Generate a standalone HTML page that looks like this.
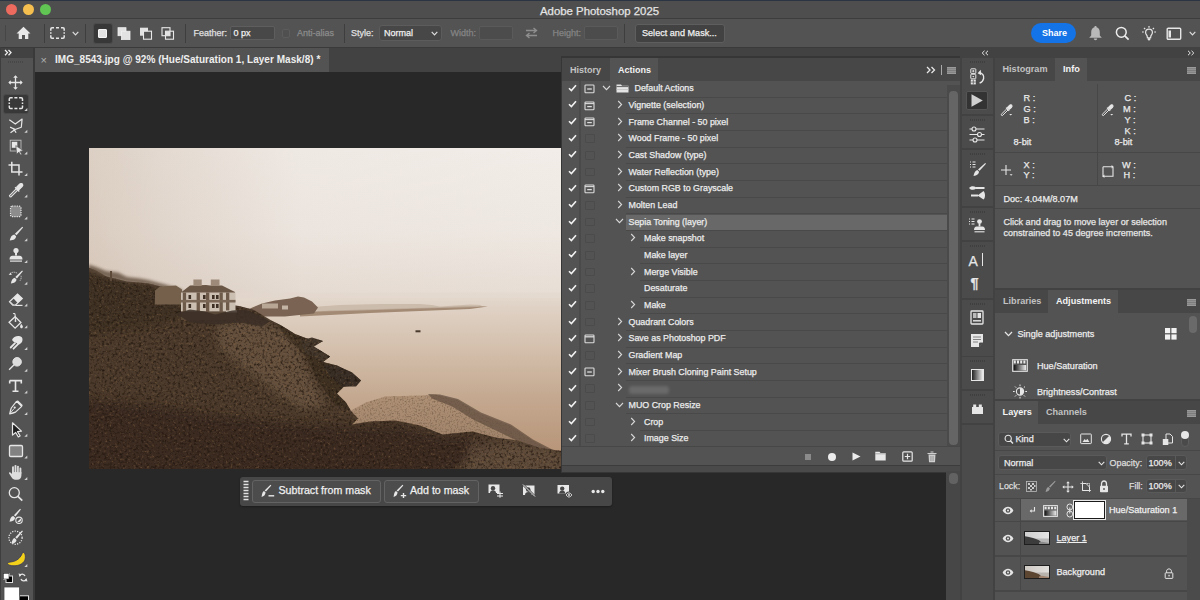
<!DOCTYPE html>
<html><head><meta charset="utf-8">
<style>
*{margin:0;padding:0;box-sizing:border-box}
html,body{width:1200px;height:600px;overflow:hidden;background:#282828;font-family:"Liberation Sans",sans-serif;color:#e6e6e6}
.a{position:absolute}
.t{position:absolute;white-space:nowrap;line-height:1;-webkit-text-stroke:0.25px currentColor}
#title{left:0;top:0;width:1200px;height:18px;background:#4e4e4e;border-top:1px solid #2b3442}
#opt{left:0;top:18px;width:1200px;height:30px;background:#535353;border-top:1px solid #3d3d3d;border-bottom:1px solid #3a3a3a}
#tabbar{left:35px;top:48px;width:527px;height:24px;background:#424242}
#doctab{left:35px;top:48px;width:294px;height:24px;background:#535353}
#tools{left:0;top:48px;width:33px;height:552px;background:#535353}
#toolsTop{left:0;top:47.5px;width:33px;height:10px;background:#424242}
#toolsBorder{left:32.5px;top:47px;width:2.5px;height:553px;background:#3a3a3a}
.sep{position:absolute;width:1px;background:#3e3e3e}
.inp{position:absolute;background:#3e3e3e;border:1px solid #5d5d5d;border-radius:2px}
</style></head><body>
<!-- title bar -->
<div id="title" class="a"></div>
<div class="a" style="left:6px;top:4px;width:11px;height:11px;border-radius:50%;background:#ed6a5e"></div>
<div class="a" style="left:23px;top:4px;width:11px;height:11px;border-radius:50%;background:#f5bf4f"></div>
<div class="a" style="left:40px;top:4px;width:11px;height:11px;border-radius:50%;background:#61c554"></div>
<div class="t" style="left:540px;top:5.6px;font-size:11.4px;color:#e4e4e4">Adobe Photoshop 2025</div>

<!-- options bar -->
<div id="opt" class="a"></div>
<div class="a" style="left:0;top:48px;width:1200px;height:24px;background:#424242"></div>


<!-- options bar content -->
<div class="sep" style="left:5px;top:25px;height:16px;background:#464646"></div>
<svg class="a" style="left:16px;top:26px" width="15" height="14" viewBox="0 0 15 14"><path d="M7.5 0.8 L14.5 7.5 L12.3 7.5 L12.3 13 L9 13 L9 9 L6 9 L6 13 L2.7 13 L2.7 7.5 L0.5 7.5 Z" fill="#e8e8e8"/></svg>
<div class="sep" style="left:44px;top:24px;height:19px"></div>
<svg class="a" style="left:50px;top:27px" width="15" height="12" viewBox="0 0 15 12"><path d="M0.8 3.8 V2 Q0.8 0.8 2 0.8 H4 M11 0.8 H13 Q14.2 0.8 14.2 2 V3.8 M14.2 8.2 V10 Q14.2 11.2 13 11.2 H11 M4 11.2 H2 Q0.8 11.2 0.8 10 V8.2 M6 0.8 H9 M6 11.2 H9 M0.8 5.2 V6.8 M14.2 5.2 V6.8" stroke="#e6e6e6" stroke-width="1.5" fill="none"/></svg>
<svg class="a" style="left:72px;top:31px" width="7" height="5" viewBox="0 0 7 5"><path d="M0.7 0.8 L3.5 3.8 L6.3 0.8" stroke="#ddd" stroke-width="1.2" fill="none"/></svg>
<div class="sep" style="left:85px;top:24px;height:19px"></div>
<div class="a" style="left:93px;top:23px;width:19.5px;height:20.5px;background:#383838;border:1px solid #4c4c4c;border-radius:3px"></div>
<div class="a" style="left:98px;top:28.5px;width:9px;height:9.5px;background:#e2e2e2;border:1px solid #f5f5f5;border-radius:1px"></div>
<svg class="a" style="left:117px;top:27px" width="14" height="13" viewBox="0 0 14 13"><rect x="1" y="0.7" width="8" height="8" fill="#e2e2e2" stroke="#f0f0f0" stroke-width="0.8"/><rect x="4.5" y="4.2" width="8.5" height="8.5" fill="#e2e2e2" stroke="#f0f0f0" stroke-width="0.8"/></svg>
<svg class="a" style="left:139px;top:27px" width="14" height="13" viewBox="0 0 14 13"><rect x="1" y="0.7" width="8" height="8" fill="#e2e2e2"/><rect x="4.5" y="4.2" width="8" height="8" fill="#535353" stroke="#e8e8e8" stroke-width="1.1"/></svg>
<svg class="a" style="left:161px;top:27px" width="14" height="13" viewBox="0 0 14 13"><rect x="1" y="0.7" width="8" height="8" fill="none" stroke="#e8e8e8" stroke-width="1.1"/><rect x="4.5" y="4.2" width="8" height="8" fill="none" stroke="#e8e8e8" stroke-width="1.1"/><rect x="4.5" y="4.2" width="4.5" height="4.5" fill="#e2e2e2"/></svg>
<div class="sep" style="left:185px;top:24px;height:19px"></div>
<div class="t" style="left:193.5px;top:29px;font-size:9px;color:#e0e0e0">Feather:</div>
<div class="inp" style="left:230px;top:26px;width:44.5px;height:14px;background:#484848;border-color:#5e5e5e"></div>
<div class="t" style="left:233.5px;top:29px;font-size:9px;color:#f0f0f0">0 px</div>
<div class="a" style="left:281.5px;top:29px;width:8.5px;height:8.5px;border:1px solid #5c5c5c;border-radius:2px;background:#505050"></div>
<div class="t" style="left:297px;top:29px;font-size:9px;color:#8c8c8c">Anti-alias</div>
<div class="sep" style="left:344px;top:24px;height:19px"></div>
<div class="t" style="left:351px;top:29px;font-size:9px;color:#e0e0e0">Style:</div>
<div class="inp" style="left:379px;top:25px;width:63px;height:16px;background:#474747;border-color:#5c5c5c;border-radius:3px"></div>
<div class="t" style="left:384px;top:29px;font-size:9px;color:#f0f0f0">Normal</div>
<svg class="a" style="left:431px;top:31px" width="7" height="5" viewBox="0 0 7 5"><path d="M0.7 0.8 L3.5 3.8 L6.3 0.8" stroke="#ddd" stroke-width="1.2" fill="none"/></svg>
<div class="t" style="left:450.5px;top:29px;font-size:9px;color:#858585">Width:</div>
<div class="inp" style="left:479px;top:26px;width:33.5px;height:14px;background:#4c4c4c;border-color:#5a5a5a"></div>
<svg class="a" style="left:525px;top:27px" width="13" height="12" viewBox="0 0 13 12"><path d="M1 3.5 H11 M8.5 1 L11.5 3.5 L8.5 6 M12 8.5 H2 M4.5 6 L1.5 8.5 L4.5 11" stroke="#8e8e8e" stroke-width="1.4" fill="none"/></svg>
<div class="t" style="left:552.5px;top:29px;font-size:9px;color:#858585">Height:</div>
<div class="inp" style="left:584px;top:26px;width:34px;height:14px;background:#4c4c4c;border-color:#5a5a5a"></div>
<div class="sep" style="left:624px;top:24px;height:19px"></div>
<div class="a" style="left:634.5px;top:24px;width:90.5px;height:18.5px;background:#424242;border:1px solid #5e5e5e;border-radius:3px"></div>
<div class="t" style="left:642px;top:29px;font-size:9.1px;color:#f0f0f0">Select and Mask...</div>
<div class="a" style="left:1031px;top:23px;width:45px;height:20px;background:#1473e6;border-radius:10px"></div>
<div class="t" style="left:1042px;top:28.5px;font-size:9px;font-weight:bold;color:#fff;-webkit-text-stroke:0">Share</div>
<svg class="a" style="left:1088px;top:25px" width="15" height="16" viewBox="0 0 15 16"><path d="M7.5 1 C8.3 1 8.6 1.6 8.6 2.2 C11 2.8 11.8 5 11.8 7.5 L11.8 10.5 L13.8 12.8 L1.2 12.8 L3.2 10.5 L3.2 7.5 C3.2 5 4 2.8 6.4 2.2 C6.4 1.6 6.7 1 7.5 1 Z M5.8 13.6 L9.2 13.6 C9.2 14.6 8.4 15.3 7.5 15.3 C6.6 15.3 5.8 14.6 5.8 13.6Z" fill="#b9b9b9"/></svg>
<svg class="a" style="left:1115px;top:26px" width="15" height="15" viewBox="0 0 15 15"><circle cx="6.3" cy="6.3" r="4.9" stroke="#ececec" stroke-width="1.5" fill="none"/><path d="M9.8 9.8 L13.6 13.6" stroke="#ececec" stroke-width="1.7"/></svg>
<svg class="a" style="left:1141px;top:25px" width="16" height="16" viewBox="0 0 16 16"><path d="M8 1 V2.8 M3 3 L4.2 4.2 M13 3 L11.8 4.2 M1 7 H2.8 M15 7 H13.2" stroke="#e6e6e6" stroke-width="1.2"/><path d="M8 4.2 C10.1 4.2 11.4 5.7 11.4 7.5 C11.4 9 10.4 9.7 9.9 10.8 L9.6 12.8 L6.4 12.8 L6.1 10.8 C5.6 9.7 4.6 9 4.6 7.5 C4.6 5.7 5.9 4.2 8 4.2 Z" stroke="#e6e6e6" stroke-width="1.2" fill="none"/><circle cx="8" cy="14.2" r="1.2" fill="#e6e6e6"/></svg>
<svg class="a" style="left:1166px;top:27px" width="16" height="14" viewBox="0 0 16 14"><rect x="1.2" y="1.2" width="13.5" height="11" rx="1" stroke="#e6e6e6" stroke-width="1.4" fill="none"/><rect x="2.5" y="3.5" width="2.5" height="7" fill="#e6e6e6"/></svg>
<svg class="a" style="left:1188.5px;top:31px" width="7" height="5" viewBox="0 0 7 5"><path d="M0.7 0.8 L3.5 3.8 L6.3 0.8" stroke="#ddd" stroke-width="1.2" fill="none"/></svg>

<!-- canvas area -->
<div id="doctab" class="a"></div>
<div class="t" style="left:40.5px;top:54.5px;font-size:11px;color:#b0b0b0;-webkit-text-stroke:0">&#215;</div>
<div class="t" style="left:55px;top:55px;font-size:10px;font-weight:bold;color:#eee;letter-spacing:0.03px;-webkit-text-stroke:0">IMG_8543.jpg @ 92% (Hue/Saturation 1, Layer Mask/8) *</div>

<!-- left tools -->
<div id="tools" class="a"></div>
<div id="toolsTop" class="a"></div>
<div id="toolsBorder" class="a"></div>

<!-- photo -->
<svg class="a" style="left:89px;top:147.5px" width="473.0" height="321.7" viewBox="0 0 473.0 321.7">
<defs>
<linearGradient id="skyH" x1="0" y1="0" x2="1" y2="0"><stop offset="0" stop-color="#dccfc3"/><stop offset="0.15" stop-color="#e3d9d0"/><stop offset="0.45" stop-color="#efe9e4"/><stop offset="1" stop-color="#f2ede8"/></linearGradient>
<linearGradient id="skyV" x1="0" y1="0" x2="0" y2="1"><stop offset="0" stop-color="#b89c84" stop-opacity="0"/><stop offset="0.55" stop-color="#b89c84" stop-opacity="0.06"/><stop offset="1" stop-color="#b89c84" stop-opacity="0.2"/></linearGradient>
<linearGradient id="sea" x1="0" y1="0" x2="0" y2="1"><stop offset="0" stop-color="#e2d6cb"/><stop offset="0.25" stop-color="#d6c3b1"/><stop offset="0.6" stop-color="#c3a78e"/><stop offset="1" stop-color="#b38f72"/></linearGradient>
<linearGradient id="beach" x1="0" y1="0" x2="0" y2="1"><stop offset="0" stop-color="#ae9075"/><stop offset="1" stop-color="#977c64"/></linearGradient>
<filter id="tex" x="0" y="0" width="100%" height="100%" color-interpolation-filters="sRGB"><feTurbulence type="fractalNoise" baseFrequency="0.38" numOctaves="3" seed="11" result="n"/><feColorMatrix in="n" type="matrix" values="0 0 0 0 0.12  0 0 0 0 0.08  0 0 0 0 0.05  0 0 0 -2.1 1.12" result="d"/><feColorMatrix in="n" type="matrix" values="0 0 0 0 0.6  0 0 0 0 0.45  0 0 0 0 0.3  1.3 0 0 0 -0.76" result="l"/><feComposite in="d" in2="SourceGraphic" operator="in" result="dd"/><feComposite in="l" in2="SourceGraphic" operator="in" result="ll"/><feMerge><feMergeNode in="SourceGraphic"/><feMergeNode in="dd"/><feMergeNode in="ll"/></feMerge></filter>
<filter id="tex2" x="0" y="0" width="100%" height="100%" color-interpolation-filters="sRGB"><feTurbulence type="fractalNoise" baseFrequency="0.6" numOctaves="2" seed="7" result="n"/><feColorMatrix in="n" type="matrix" values="0 0 0 0 0.42  0 0 0 0 0.33  0 0 0 0 0.25  0 0 0 -1.6 0.85" result="d"/><feComposite in="d" in2="SourceGraphic" operator="in" result="dd"/><feMerge><feMergeNode in="SourceGraphic"/><feMergeNode in="dd"/></feMerge></filter>
<filter id="soft" x="-5%" y="-5%" width="110%" height="110%"><feGaussianBlur stdDeviation="0.7"/></filter>
<filter id="soft3" x="-50%" y="-50%" width="200%" height="200%"><feGaussianBlur stdDeviation="4"/></filter>
</defs>
<clipPath id="pc"><rect x="0" y="0" width="473.0" height="321.7"/></clipPath>
<rect x="0" y="0" width="473.0" height="321.7" fill="url(#skyH)"/>
<rect x="0" y="0" width="473.0" height="150.5" fill="url(#skyV)"/>
<rect x="0" y="150.0" width="473.0" height="171.7" fill="url(#sea)"/>
<rect x="0" y="144.5" width="473.0" height="8" fill="#e4d8cd" opacity="0.5" filter="url(#soft)"/>
<polygon points="211.0,164.5 241.0,162.5 291.0,161.0 341.0,159.5 381.0,158.0 399.0,158.5 381.0,161.0 331.0,163.0 281.0,165.0 241.0,167.0 211.0,168.5" fill="#a38a74" filter="url(#soft)"/>
<polygon points="216.0,159.5 251.0,157.0 291.0,156.0 331.0,156.0 343.0,157.0 351.0,158.5 381.0,156.5 393.0,157.0 389.0,159.0 331.0,160.5 271.0,162.5 231.0,163.5" fill="#c6b5a4" opacity="0.75" filter="url(#soft)"/>
<polygon points="161.0,160.5 173.0,155.5 186.0,152.5 201.0,150.5 209.0,148.5 215.0,149.5 223.0,153.5 229.0,159.5 225.0,165.5 196.0,168.5 166.0,168.5" fill="#7a6452" filter="url(#soft)"/>
<rect x="173" y="155.5" width="16" height="5" fill="#c8b8a6" opacity="0.8"/><rect x="193" y="157.5" width="6" height="4" fill="#d6c8b8" opacity="0.8"/>
<polygon points="262.0,262.5 277.0,254.5 296.0,248.5 331.0,247.5 346.0,246.5 368.5,252.0 391.0,265.5 421.0,277.5 443.5,292.5 466.0,304.5 473.0,307.5 473.0,322.5 256.0,322.5" fill="url(#beach)" filter="url(#tex2)"/>
<polygon points="339.0,246.0 351.0,246.5 369.0,251.0 392.0,264.5 422.0,276.5 444.0,291.5 467.0,303.5 473.0,306.5 473.0,312.5 459.0,307.5 436.0,296.5 411.0,284.5 386.0,272.5 363.0,258.5 343.0,250.5" fill="#5e4c3c" opacity="0.7" filter="url(#soft)"/>
<g clip-path="url(#pc)"><g filter="url(#tex)">
<polygon points="-0.5,119.5 7.0,122.5 17.0,128.2 38.0,133.5 59.0,135.2 76.0,139.5 90.5,144.5 111.0,152.5 150.0,158.0 164.0,161.5 181.5,172.0 192.0,177.3 206.0,186.0 220.0,191.3 234.0,193.0 223.5,198.3 241.0,208.5 234.0,214.0 248.0,217.5 263.0,224.5 272.0,232.5 267.0,237.5 255.0,238.5 248.0,245.5 257.0,254.5 262.0,263.0 269.0,270.5 263.0,276.5 281.0,273.5 306.0,272.5 331.0,277.5 353.5,286.5 383.5,283.5 406.0,289.5 428.5,292.5 451.0,300.0 473.0,303.0 473.0,322.5 -0.5,322.5" fill="#4c3b2c"/>
<clipPath id="hc"><polygon points="-0.5,119.5 7.0,122.5 17.0,128.2 38.0,133.5 59.0,135.2 76.0,139.5 90.5,144.5 111.0,152.5 150.0,158.0 164.0,161.5 181.5,172.0 192.0,177.3 206.0,186.0 220.0,191.3 234.0,193.0 223.5,198.3 241.0,208.5 234.0,214.0 248.0,217.5 263.0,224.5 272.0,232.5 267.0,237.5 255.0,238.5 248.0,245.5 257.0,254.5 262.0,263.0 269.0,270.5 263.0,276.5 281.0,273.5 306.0,272.5 331.0,277.5 353.5,286.5 383.5,283.5 406.0,289.5 428.5,292.5 451.0,300.0 473.0,303.0 473.0,322.5 -0.5,322.5"/></clipPath>
<g clip-path="url(#hc)">
<polygon points="126.0,178.5 156.0,170.5 179.0,174.5 199.0,186.5 211.0,200.5 217.0,218.5 227.0,238.5 237.0,256.5 216.0,262.5 186.0,244.5 156.0,220.5 131.0,200.5" fill="#7a644e" opacity="0.55" filter="url(#soft3)"/>
<polygon points="-9.0,114.5 17.0,124.5 38.0,130.5 59.0,132.5 76.0,137.5 93.0,148.5 106.0,167.5 61.0,177.5 -9.0,187.5" fill="#35291e" opacity="0.5" filter="url(#soft3)"/>
<polygon points="-29.0,247.5 61.0,257.5 131.0,268.5 211.0,276.5 256.0,278.5 311.0,278.5 351.0,288.5 381.0,288.5 411.0,296.5 341.0,332.5 -29.0,342.5" fill="#30241a" opacity="0.6" filter="url(#soft3)"/>
<polygon points="381.0,292.5 431.0,294.5 473.0,302.5 486.0,332.5 371.0,332.5" fill="#6f5a46" opacity="0.55" filter="url(#soft3)"/>
<polygon points="186.0,174.5 211.0,186.5 234.0,193.5 242.0,210.0 251.0,218.5 271.0,234.5 263.0,262.5 246.0,257.5 229.0,232.5 216.0,207.5 196.0,187.5" fill="#35291f" opacity="0.55" filter="url(#soft)"/>
</g>
<polygon points="234.0,216.5 249.0,218.5 263.0,224.5 272.0,232.5 267.0,238.5 253.0,238.5 241.0,228.5" fill="#3a2f26"/>
<polygon points="211.0,192.5 223.0,189.5 234.0,193.0 225.0,198.5 241.0,208.5 233.0,214.5 216.0,204.5" fill="#44372b"/>
</g></g>
<filter id="soft15" x="-20%" y="-50%" width="140%" height="200%"><feGaussianBlur stdDeviation="1.6"/></filter>
<polygon points="-0.5,116.5 7.0,119.0 17.0,123.0 29.0,124.5 38.0,129.0 51.0,130.5 59.0,132.0 76.0,136.5 93.0,141.5 93.0,144.5 76.0,140.5 59.0,136.5 38.0,134.5 17.0,129.5 -0.5,123.5" fill="#5e4c3a" opacity="0.8" filter="url(#soft15)"/>
<rect x="21" y="123.0" width="2" height="10" fill="#5e4a38"/>
<polygon points="66.0,142.5 71.0,138.5 87.0,137.5 93.0,141.5 93.0,156.5 66.0,156.5" fill="#74604c" filter="url(#soft)"/>
<polygon points="92.0,144.5 101.0,137.5 117.0,137.0 121.0,137.5 133.0,137.5 146.0,144.0 146.0,145.5 92.0,145.5" fill="#6a5645"/>
<rect x="104.4" y="131.5" width="8.3" height="6.5" fill="#9d8a78"/><rect x="121.80000000000001" y="131.5" width="8.7" height="6.5" fill="#9d8a78"/>
<rect x="92" y="144.5" width="54.5" height="19.3" fill="#cbbfb2"/>
<rect x="93.80000000000001" y="144.5" width="3.3" height="19.3" fill="#6e5a48"/>
<rect x="107.6" y="144.5" width="3.3" height="19.3" fill="#6e5a48"/>
<rect x="117" y="144.5" width="3.3" height="19.3" fill="#6e5a48"/>
<rect x="130.5" y="144.5" width="3.3" height="19.3" fill="#6e5a48"/>
<rect x="137" y="144.5" width="3.3" height="19.3" fill="#6e5a48"/>
<rect x="92" y="151.89999999999998" width="54.5" height="2.6" fill="#7a6654"/>
<rect x="99.5" y="147.0" width="2.6" height="4" fill="#3e3024"/>
<rect x="99.5" y="156.0" width="2.6" height="4" fill="#3e3024"/>
<rect x="114" y="147.0" width="2.6" height="4" fill="#3e3024"/>
<rect x="114" y="156.0" width="2.6" height="4" fill="#3e3024"/>
<rect x="123" y="147.0" width="2.6" height="4" fill="#3e3024"/>
<rect x="123" y="156.0" width="2.6" height="4" fill="#3e3024"/>
<rect x="127" y="147.0" width="2.6" height="4" fill="#3e3024"/>
<rect x="127" y="156.0" width="2.6" height="4" fill="#3e3024"/>
<rect x="92" y="163.5" width="54.5" height="8.5" fill="#5a4838"/>
<rect x="137" y="162.5" width="11" height="2" fill="#d9cfc3"/>
<polygon points="87.0,165.5 101.0,161.5 116.0,163.5 126.0,166.5 143.0,162.5 156.0,161.5 169.0,166.5 181.0,173.5 173.0,178.5 151.0,174.5 126.0,176.5 101.0,174.5" fill="#3a2f25" opacity="0.85" filter="url(#soft)"/>
<rect x="326.5" y="182.3" width="5" height="2" fill="#4a3b2f"/>
</svg>
<!-- mask bar -->
<div class="a" style="left:240px;top:477px;width:372px;height:29px;background:#474747;border-radius:3px;box-shadow:0 1px 2px rgba(0,0,0,0.3)"></div>
<svg class="a" style="left:242.5px;top:480px" width="6" height="23" viewBox="0 0 6 23"><path d="M0.5 1.5 H5.5 M0.5 4.5 H5.5 M0.5 7.5 H5.5 M0.5 10.5 H5.5 M0.5 13.5 H5.5 M0.5 16.5 H5.5 M0.5 19.5 H5.5" stroke="#e0e0e0" stroke-width="1.3"/></svg>
<div class="a" style="left:252px;top:479.5px;width:129px;height:23.5px;background:#4c4c4c;border:1px solid #636363;border-radius:3px"></div>
<div class="a" style="left:384px;top:479.5px;width:94.7px;height:23.5px;background:#4c4c4c;border:1px solid #636363;border-radius:3px"></div>
<svg class="a" style="left:261px;top:484px" width="14" height="14" viewBox="0 0 14 14"><path d="M9.5 0.8 L10.3 1.6 L5 7.6 L3.6 6.4 Z" fill="#e8e8e8"/><path d="M3 7 L4.6 8.6 C4.4 10.8 2.8 12.6 0.6 13 C0.9 10.4 1.4 7.6 3 7 Z" fill="#e8e8e8"/><path d="M7.5 11.8 H13.2" stroke="#e8e8e8" stroke-width="1.4"/></svg>
<div class="t" style="left:278.5px;top:485px;font-size:10.65px;color:#f0f0f0">Subtract from mask</div>
<svg class="a" style="left:393px;top:484px" width="14" height="14" viewBox="0 0 14 14"><path d="M9.5 0.8 L10.3 1.6 L5 7.6 L3.6 6.4 Z" fill="#e8e8e8"/><path d="M3 7 L4.6 8.6 C4.4 10.8 2.8 12.6 0.6 13 C0.9 10.4 1.4 7.6 3 7 Z" fill="#e8e8e8"/><path d="M7.8 11.6 H13.2 M10.5 8.9 V14" stroke="#e8e8e8" stroke-width="1.4"/></svg>
<div class="t" style="left:410px;top:485px;font-size:10.65px;color:#f0f0f0">Add to mask</div>
<svg class="a" style="left:488px;top:484px" width="16" height="14" viewBox="0 0 16 14"><rect x="0.5" y="0.5" width="11" height="8.5" fill="#e8e8e8"/><circle cx="5" cy="4.2" r="2.2" fill="#474747"/><path d="M2 9 C2 7 3.5 6.2 5 6.2 C6.5 6.2 8 7 8 9Z" fill="#474747"/><path d="M9 9.5 H15 M9 12 H15 M12 7.5 V13.8" stroke="#e8e8e8" stroke-width="1"/></svg>
<svg class="a" style="left:522px;top:484px" width="14" height="13" viewBox="0 0 14 13"><rect x="1" y="1.5" width="11.5" height="9.5" fill="#e8e8e8"/><circle cx="6.2" cy="5.5" r="2.3" fill="#474747"/><path d="M3 11 C3 8.8 4.5 8 6.2 8 C7.9 8 9.4 8.8 9.4 11Z" fill="#474747"/><path d="M1 0.5 L13 12.5" stroke="#474747" stroke-width="2.2"/><path d="M1 0.5 L13 12.5" stroke="#e8e8e8" stroke-width="1"/></svg>
<svg class="a" style="left:557px;top:483.5px" width="16" height="15" viewBox="0 0 16 15"><rect x="0.5" y="1" width="11.5" height="8.5" fill="#e8e8e8"/><circle cx="5.2" cy="4.6" r="2.2" fill="#474747"/><path d="M2.2 9.5 C2.2 7.5 3.6 6.6 5.2 6.6 C6.8 6.6 8.2 7.5 8.2 9.5Z" fill="#474747"/><circle cx="12" cy="11" r="3.4" fill="#474747"/><path d="M9.2 11 C10 9.6 11 9 12 9 C13 9 14 9.6 14.8 11 C14 12.4 13 13 12 13 C11 13 10 12.4 9.2 11Z" stroke="#e8e8e8" stroke-width="0.9" fill="none"/><circle cx="12" cy="11" r="0.9" fill="#e8e8e8"/></svg>
<svg class="a" style="left:590.5px;top:488.5px" width="14" height="5" viewBox="0 0 14 5"><circle cx="2.2" cy="2.5" r="1.7" fill="#e8e8e8"/><circle cx="7" cy="2.5" r="1.7" fill="#e8e8e8"/><circle cx="11.8" cy="2.5" r="1.7" fill="#e8e8e8"/></svg>
<!-- actions panel -->
<div class="a" style="left:561.3px;top:55.5px;width:400.7px;height:417px;background:#363636"></div>
<div class="a" style="left:562px;top:58px;width:398px;height:412px;background:#535353"></div>
<div class="a" style="left:562px;top:58px;width:398px;height:23.3px;background:#474747"></div>
<div class="a" style="left:610px;top:58px;width:47.5px;height:23.3px;background:#535353"></div>
<div class="t" style="left:570px;top:65.5px;font-size:9px;font-weight:bold;color:#c4c4c4;-webkit-text-stroke:0">History</div>
<div class="t" style="left:618px;top:65.5px;font-size:9px;font-weight:bold;color:#f2f2f2;-webkit-text-stroke:0">Actions</div>
<svg class="a" style="left:926px;top:66px" width="10" height="8" viewBox="0 0 10 8"><path d="M1 1 L4 4 L1 7 M5.5 1 L8.5 4 L5.5 7" stroke="#e8e8e8" stroke-width="1.3" fill="none"/></svg>
<div class="a" style="left:940.8px;top:65px;width:1px;height:10px;background:#aaa"></div>
<svg class="a" style="left:947px;top:66.5px" width="9" height="7" viewBox="0 0 9 7"><rect x="0" y="0" width="9" height="7" fill="#9a9a9a"/><path d="M0 1.75 H9 M0 3.5 H9 M0 5.25 H9" stroke="#6a6a6a" stroke-width="0.6"/></svg>
<div class="a" style="left:579.3px;top:81.3px;width:1.6px;height:364.7px;background:#4a4a4a"></div>
<div class="a" style="left:947px;top:85px;width:13px;height:361px;background:#4a4a4a"></div>
<div class="a" style="left:949px;top:91px;width:8.5px;height:354px;background:#656565;border-radius:4px"></div>
<div class="a" style="left:626px;top:96.67px;width:321px;height:1px;background:#494949"></div>
<svg class="a" style="left:567.5px;top:83.50px" width="9" height="8" viewBox="0 0 9 8"><path d="M1 4.2 L3.4 6.6 L8 1.2" stroke="#f2f2f2" stroke-width="1.6" fill="none"/></svg>
<svg class="a" style="left:584px;top:83.90px" width="11" height="10" viewBox="0 0 11 10"><rect x="1" y="1" width="9" height="7.8" rx="0.8" stroke="#dcdcdc" stroke-width="1.1" fill="none"/><path d="M3.2 5 H7.8" stroke="#dcdcdc" stroke-width="1.3"/></svg>
<svg class="a" style="left:601.5px;top:85.00px" width="9" height="6" viewBox="0 0 9 6"><path d="M1 1 L4.5 4.6 L8 1" stroke="#d8d8d8" stroke-width="1.1" fill="none"/></svg>
<svg class="a" style="left:615.5px;top:84.30px" width="13" height="9" viewBox="0 0 13 9"><path d="M0.5 0.5 H5 L6 1.8 H12.5 V8.5 H0.5 Z" fill="#e4e4e4"/><path d="M0.5 2.6 H12.5" stroke="#535353" stroke-width="0.9"/><path d="M0.5 5.5 H12.5" stroke="#bdbdbd" stroke-width="0.7"/></svg>
<div class="t" style="left:634.5px;top:84.20px;font-size:8.9px;color:#ececec">Default Actions</div>
<div class="a" style="left:626px;top:113.33px;width:321px;height:1px;background:#494949"></div>
<svg class="a" style="left:567.5px;top:100.17px" width="9" height="8" viewBox="0 0 9 8"><path d="M1 4.2 L3.4 6.6 L8 1.2" stroke="#f2f2f2" stroke-width="1.6" fill="none"/></svg>
<svg class="a" style="left:584px;top:100.57px" width="11" height="10" viewBox="0 0 11 10"><rect x="1" y="1" width="9" height="7.8" rx="0.8" stroke="#dcdcdc" stroke-width="1.1" fill="none"/><path d="M1 2.6 H10" stroke="#dcdcdc" stroke-width="1.1"/><path d="M3.2 5.6 H7.8" stroke="#dcdcdc" stroke-width="1.3"/></svg>
<svg class="a" style="left:616.5px;top:99.97px" width="6" height="9" viewBox="0 0 6 9"><path d="M1.2 1 L4.6 4.5 L1.2 8" stroke="#d8d8d8" stroke-width="1.1" fill="none"/></svg>
<div class="t" style="left:628.5px;top:100.87px;font-size:8.9px;color:#ececec">Vignette (selection)</div>
<div class="a" style="left:626px;top:130.00px;width:321px;height:1px;background:#494949"></div>
<svg class="a" style="left:567.5px;top:116.83px" width="9" height="8" viewBox="0 0 9 8"><path d="M1 4.2 L3.4 6.6 L8 1.2" stroke="#f2f2f2" stroke-width="1.6" fill="none"/></svg>
<svg class="a" style="left:584px;top:117.23px" width="11" height="10" viewBox="0 0 11 10"><rect x="1" y="1" width="9" height="7.8" rx="0.8" stroke="#dcdcdc" stroke-width="1.1" fill="none"/><path d="M1 2.6 H10" stroke="#dcdcdc" stroke-width="1.1"/><path d="M3.2 5.6 H7.8" stroke="#dcdcdc" stroke-width="1.3"/></svg>
<svg class="a" style="left:616.5px;top:116.63px" width="6" height="9" viewBox="0 0 6 9"><path d="M1.2 1 L4.6 4.5 L1.2 8" stroke="#d8d8d8" stroke-width="1.1" fill="none"/></svg>
<div class="t" style="left:628.5px;top:117.53px;font-size:8.9px;color:#ececec">Frame Channel - 50 pixel</div>
<div class="a" style="left:626px;top:146.67px;width:321px;height:1px;background:#494949"></div>
<svg class="a" style="left:567.5px;top:133.50px" width="9" height="8" viewBox="0 0 9 8"><path d="M1 4.2 L3.4 6.6 L8 1.2" stroke="#f2f2f2" stroke-width="1.6" fill="none"/></svg>
<div class="a" style="left:584.5px;top:134.40px;width:10px;height:8.5px;border:1px solid #4b4b4b;border-radius:1px"></div>
<svg class="a" style="left:616.5px;top:133.30px" width="6" height="9" viewBox="0 0 6 9"><path d="M1.2 1 L4.6 4.5 L1.2 8" stroke="#d8d8d8" stroke-width="1.1" fill="none"/></svg>
<div class="t" style="left:628.5px;top:134.20px;font-size:8.9px;color:#ececec">Wood Frame - 50 pixel</div>
<div class="a" style="left:626px;top:163.34px;width:321px;height:1px;background:#494949"></div>
<svg class="a" style="left:567.5px;top:150.17px" width="9" height="8" viewBox="0 0 9 8"><path d="M1 4.2 L3.4 6.6 L8 1.2" stroke="#f2f2f2" stroke-width="1.6" fill="none"/></svg>
<div class="a" style="left:584.5px;top:151.07px;width:10px;height:8.5px;border:1px solid #4b4b4b;border-radius:1px"></div>
<svg class="a" style="left:616.5px;top:149.97px" width="6" height="9" viewBox="0 0 6 9"><path d="M1.2 1 L4.6 4.5 L1.2 8" stroke="#d8d8d8" stroke-width="1.1" fill="none"/></svg>
<div class="t" style="left:628.5px;top:150.87px;font-size:8.9px;color:#ececec">Cast Shadow (type)</div>
<div class="a" style="left:626px;top:180.00px;width:321px;height:1px;background:#494949"></div>
<svg class="a" style="left:567.5px;top:166.83px" width="9" height="8" viewBox="0 0 9 8"><path d="M1 4.2 L3.4 6.6 L8 1.2" stroke="#f2f2f2" stroke-width="1.6" fill="none"/></svg>
<div class="a" style="left:584.5px;top:167.73px;width:10px;height:8.5px;border:1px solid #4b4b4b;border-radius:1px"></div>
<svg class="a" style="left:616.5px;top:166.63px" width="6" height="9" viewBox="0 0 6 9"><path d="M1.2 1 L4.6 4.5 L1.2 8" stroke="#d8d8d8" stroke-width="1.1" fill="none"/></svg>
<div class="t" style="left:628.5px;top:167.53px;font-size:8.9px;color:#ececec">Water Reflection (type)</div>
<div class="a" style="left:626px;top:196.67px;width:321px;height:1px;background:#494949"></div>
<svg class="a" style="left:567.5px;top:183.50px" width="9" height="8" viewBox="0 0 9 8"><path d="M1 4.2 L3.4 6.6 L8 1.2" stroke="#f2f2f2" stroke-width="1.6" fill="none"/></svg>
<svg class="a" style="left:584px;top:183.90px" width="11" height="10" viewBox="0 0 11 10"><rect x="1" y="1" width="9" height="7.8" rx="0.8" stroke="#dcdcdc" stroke-width="1.1" fill="none"/><path d="M1 2.6 H10" stroke="#dcdcdc" stroke-width="1.1"/><path d="M3.2 5.6 H7.8" stroke="#dcdcdc" stroke-width="1.3"/></svg>
<svg class="a" style="left:616.5px;top:183.30px" width="6" height="9" viewBox="0 0 6 9"><path d="M1.2 1 L4.6 4.5 L1.2 8" stroke="#d8d8d8" stroke-width="1.1" fill="none"/></svg>
<div class="t" style="left:628.5px;top:184.20px;font-size:8.9px;color:#ececec">Custom RGB to Grayscale</div>
<div class="a" style="left:626px;top:213.34px;width:321px;height:1px;background:#494949"></div>
<svg class="a" style="left:567.5px;top:200.17px" width="9" height="8" viewBox="0 0 9 8"><path d="M1 4.2 L3.4 6.6 L8 1.2" stroke="#f2f2f2" stroke-width="1.6" fill="none"/></svg>
<div class="a" style="left:584.5px;top:201.07px;width:10px;height:8.5px;border:1px solid #4b4b4b;border-radius:1px"></div>
<svg class="a" style="left:616.5px;top:199.97px" width="6" height="9" viewBox="0 0 6 9"><path d="M1.2 1 L4.6 4.5 L1.2 8" stroke="#d8d8d8" stroke-width="1.1" fill="none"/></svg>
<div class="t" style="left:628.5px;top:200.87px;font-size:8.9px;color:#ececec">Molten Lead</div>
<div class="a" style="left:626px;top:214.94px;width:321px;height:15.47px;background:#686868"></div>
<div class="a" style="left:626px;top:230.00px;width:321px;height:1px;background:#494949"></div>
<svg class="a" style="left:567.5px;top:216.84px" width="9" height="8" viewBox="0 0 9 8"><path d="M1 4.2 L3.4 6.6 L8 1.2" stroke="#f2f2f2" stroke-width="1.6" fill="none"/></svg>
<div class="a" style="left:584.5px;top:217.74px;width:10px;height:8.5px;border:1px solid #4b4b4b;border-radius:1px"></div>
<svg class="a" style="left:614.5px;top:218.34px" width="9" height="6" viewBox="0 0 9 6"><path d="M1 1 L4.5 4.6 L8 1" stroke="#d8d8d8" stroke-width="1.1" fill="none"/></svg>
<div class="t" style="left:628.5px;top:217.54px;font-size:8.9px;color:#ececec">Sepia Toning (layer)</div>
<div class="a" style="left:639.5px;top:246.67px;width:307.5px;height:1px;background:#494949"></div>
<svg class="a" style="left:567.5px;top:233.50px" width="9" height="8" viewBox="0 0 9 8"><path d="M1 4.2 L3.4 6.6 L8 1.2" stroke="#f2f2f2" stroke-width="1.6" fill="none"/></svg>
<div class="a" style="left:584.5px;top:234.40px;width:10px;height:8.5px;border:1px solid #4b4b4b;border-radius:1px"></div>
<svg class="a" style="left:629.5px;top:233.30px" width="6" height="9" viewBox="0 0 6 9"><path d="M1.2 1 L4.6 4.5 L1.2 8" stroke="#d8d8d8" stroke-width="1.1" fill="none"/></svg>
<div class="t" style="left:644px;top:234.20px;font-size:8.9px;color:#ececec">Make snapshot</div>
<div class="a" style="left:639.5px;top:263.34px;width:307.5px;height:1px;background:#494949"></div>
<svg class="a" style="left:567.5px;top:250.17px" width="9" height="8" viewBox="0 0 9 8"><path d="M1 4.2 L3.4 6.6 L8 1.2" stroke="#f2f2f2" stroke-width="1.6" fill="none"/></svg>
<div class="a" style="left:584.5px;top:251.07px;width:10px;height:8.5px;border:1px solid #4b4b4b;border-radius:1px"></div>
<div class="t" style="left:644px;top:250.87px;font-size:8.9px;color:#ececec">Make layer</div>
<div class="a" style="left:639.5px;top:280.00px;width:307.5px;height:1px;background:#494949"></div>
<svg class="a" style="left:567.5px;top:266.84px" width="9" height="8" viewBox="0 0 9 8"><path d="M1 4.2 L3.4 6.6 L8 1.2" stroke="#f2f2f2" stroke-width="1.6" fill="none"/></svg>
<div class="a" style="left:584.5px;top:267.74px;width:10px;height:8.5px;border:1px solid #4b4b4b;border-radius:1px"></div>
<svg class="a" style="left:629.5px;top:266.64px" width="6" height="9" viewBox="0 0 6 9"><path d="M1.2 1 L4.6 4.5 L1.2 8" stroke="#d8d8d8" stroke-width="1.1" fill="none"/></svg>
<div class="t" style="left:644px;top:267.54px;font-size:8.9px;color:#ececec">Merge Visible</div>
<div class="a" style="left:639.5px;top:296.67px;width:307.5px;height:1px;background:#494949"></div>
<svg class="a" style="left:567.5px;top:283.50px" width="9" height="8" viewBox="0 0 9 8"><path d="M1 4.2 L3.4 6.6 L8 1.2" stroke="#f2f2f2" stroke-width="1.6" fill="none"/></svg>
<div class="a" style="left:584.5px;top:284.40px;width:10px;height:8.5px;border:1px solid #4b4b4b;border-radius:1px"></div>
<div class="t" style="left:644px;top:284.20px;font-size:8.9px;color:#ececec">Desaturate</div>
<div class="a" style="left:639.5px;top:313.34px;width:307.5px;height:1px;background:#494949"></div>
<svg class="a" style="left:567.5px;top:300.17px" width="9" height="8" viewBox="0 0 9 8"><path d="M1 4.2 L3.4 6.6 L8 1.2" stroke="#f2f2f2" stroke-width="1.6" fill="none"/></svg>
<div class="a" style="left:584.5px;top:301.07px;width:10px;height:8.5px;border:1px solid #4b4b4b;border-radius:1px"></div>
<svg class="a" style="left:629.5px;top:299.97px" width="6" height="9" viewBox="0 0 6 9"><path d="M1.2 1 L4.6 4.5 L1.2 8" stroke="#d8d8d8" stroke-width="1.1" fill="none"/></svg>
<div class="t" style="left:644px;top:300.87px;font-size:8.9px;color:#ececec">Make</div>
<div class="a" style="left:626px;top:330.01px;width:321px;height:1px;background:#494949"></div>
<svg class="a" style="left:567.5px;top:316.84px" width="9" height="8" viewBox="0 0 9 8"><path d="M1 4.2 L3.4 6.6 L8 1.2" stroke="#f2f2f2" stroke-width="1.6" fill="none"/></svg>
<div class="a" style="left:584.5px;top:317.74px;width:10px;height:8.5px;border:1px solid #4b4b4b;border-radius:1px"></div>
<svg class="a" style="left:616.5px;top:316.64px" width="6" height="9" viewBox="0 0 6 9"><path d="M1.2 1 L4.6 4.5 L1.2 8" stroke="#d8d8d8" stroke-width="1.1" fill="none"/></svg>
<div class="t" style="left:628.5px;top:317.54px;font-size:8.9px;color:#ececec">Quadrant Colors</div>
<div class="a" style="left:626px;top:346.67px;width:321px;height:1px;background:#494949"></div>
<svg class="a" style="left:567.5px;top:333.50px" width="9" height="8" viewBox="0 0 9 8"><path d="M1 4.2 L3.4 6.6 L8 1.2" stroke="#f2f2f2" stroke-width="1.6" fill="none"/></svg>
<svg class="a" style="left:584px;top:333.91px" width="11" height="10" viewBox="0 0 11 10"><rect x="1" y="1" width="9" height="7.8" rx="0.8" stroke="#dcdcdc" stroke-width="1.1" fill="none"/><path d="M1 2.8 H10" stroke="#dcdcdc" stroke-width="1.3"/></svg>
<svg class="a" style="left:616.5px;top:333.31px" width="6" height="9" viewBox="0 0 6 9"><path d="M1.2 1 L4.6 4.5 L1.2 8" stroke="#d8d8d8" stroke-width="1.1" fill="none"/></svg>
<div class="t" style="left:628.5px;top:334.20px;font-size:8.9px;color:#ececec">Save as Photoshop PDF</div>
<div class="a" style="left:626px;top:363.34px;width:321px;height:1px;background:#494949"></div>
<svg class="a" style="left:567.5px;top:350.17px" width="9" height="8" viewBox="0 0 9 8"><path d="M1 4.2 L3.4 6.6 L8 1.2" stroke="#f2f2f2" stroke-width="1.6" fill="none"/></svg>
<div class="a" style="left:584.5px;top:351.07px;width:10px;height:8.5px;border:1px solid #4b4b4b;border-radius:1px"></div>
<svg class="a" style="left:616.5px;top:349.97px" width="6" height="9" viewBox="0 0 6 9"><path d="M1.2 1 L4.6 4.5 L1.2 8" stroke="#d8d8d8" stroke-width="1.1" fill="none"/></svg>
<div class="t" style="left:628.5px;top:350.87px;font-size:8.9px;color:#ececec">Gradient Map</div>
<div class="a" style="left:626px;top:380.01px;width:321px;height:1px;background:#494949"></div>
<svg class="a" style="left:567.5px;top:366.84px" width="9" height="8" viewBox="0 0 9 8"><path d="M1 4.2 L3.4 6.6 L8 1.2" stroke="#f2f2f2" stroke-width="1.6" fill="none"/></svg>
<svg class="a" style="left:584px;top:367.24px" width="11" height="10" viewBox="0 0 11 10"><rect x="1" y="1" width="9" height="7.8" rx="0.8" stroke="#dcdcdc" stroke-width="1.1" fill="none"/><path d="M3.2 5 H7.8" stroke="#dcdcdc" stroke-width="1.3"/></svg>
<svg class="a" style="left:616.5px;top:366.64px" width="6" height="9" viewBox="0 0 6 9"><path d="M1.2 1 L4.6 4.5 L1.2 8" stroke="#d8d8d8" stroke-width="1.1" fill="none"/></svg>
<div class="t" style="left:628.5px;top:367.54px;font-size:8.9px;color:#ececec">Mixer Brush Cloning Paint Setup</div>
<div class="a" style="left:626px;top:396.67px;width:321px;height:1px;background:#494949"></div>
<svg class="a" style="left:567.5px;top:383.51px" width="9" height="8" viewBox="0 0 9 8"><path d="M1 4.2 L3.4 6.6 L8 1.2" stroke="#f2f2f2" stroke-width="1.6" fill="none"/></svg>
<div class="a" style="left:584.5px;top:384.41px;width:10px;height:8.5px;border:1px solid #4b4b4b;border-radius:1px"></div>
<svg class="a" style="left:616.5px;top:383.31px" width="6" height="9" viewBox="0 0 6 9"><path d="M1.2 1 L4.6 4.5 L1.2 8" stroke="#d8d8d8" stroke-width="1.1" fill="none"/></svg>
<div class="a" style="left:629px;top:385.81px;width:40px;height:8px;background:#6a6a6a;border-radius:3px;filter:blur(1.8px)"></div>
<div class="a" style="left:626px;top:413.34px;width:321px;height:1px;background:#494949"></div>
<svg class="a" style="left:567.5px;top:400.17px" width="9" height="8" viewBox="0 0 9 8"><path d="M1 4.2 L3.4 6.6 L8 1.2" stroke="#f2f2f2" stroke-width="1.6" fill="none"/></svg>
<div class="a" style="left:584.5px;top:401.07px;width:10px;height:8.5px;border:1px solid #4b4b4b;border-radius:1px"></div>
<svg class="a" style="left:614.5px;top:401.67px" width="9" height="6" viewBox="0 0 9 6"><path d="M1 1 L4.5 4.6 L8 1" stroke="#d8d8d8" stroke-width="1.1" fill="none"/></svg>
<div class="t" style="left:628.5px;top:400.87px;font-size:8.9px;color:#ececec">MUO Crop Resize</div>
<div class="a" style="left:639.5px;top:430.01px;width:307.5px;height:1px;background:#494949"></div>
<svg class="a" style="left:567.5px;top:416.84px" width="9" height="8" viewBox="0 0 9 8"><path d="M1 4.2 L3.4 6.6 L8 1.2" stroke="#f2f2f2" stroke-width="1.6" fill="none"/></svg>
<div class="a" style="left:584.5px;top:417.74px;width:10px;height:8.5px;border:1px solid #4b4b4b;border-radius:1px"></div>
<svg class="a" style="left:629.5px;top:416.64px" width="6" height="9" viewBox="0 0 6 9"><path d="M1.2 1 L4.6 4.5 L1.2 8" stroke="#d8d8d8" stroke-width="1.1" fill="none"/></svg>
<div class="t" style="left:644px;top:417.54px;font-size:8.9px;color:#ececec">Crop</div>
<div class="a" style="left:639.5px;top:446.67px;width:307.5px;height:1px;background:#494949"></div>
<svg class="a" style="left:567.5px;top:433.51px" width="9" height="8" viewBox="0 0 9 8"><path d="M1 4.2 L3.4 6.6 L8 1.2" stroke="#f2f2f2" stroke-width="1.6" fill="none"/></svg>
<div class="a" style="left:584.5px;top:434.41px;width:10px;height:8.5px;border:1px solid #4b4b4b;border-radius:1px"></div>
<svg class="a" style="left:629.5px;top:433.31px" width="6" height="9" viewBox="0 0 6 9"><path d="M1.2 1 L4.6 4.5 L1.2 8" stroke="#d8d8d8" stroke-width="1.1" fill="none"/></svg>
<div class="t" style="left:644px;top:434.21px;font-size:8.9px;color:#ececec">Image Size</div>
<div class="a" style="left:562px;top:446px;width:398px;height:19.5px;background:#535353;border-top:1px solid #474747"></div>
<div class="a" style="left:562px;top:465.3px;width:398px;height:6.7px;background:#4a4a4a;border-top:1.5px solid #3c3c3c"></div>
<div class="a" style="left:805px;top:453.5px;width:6px;height:6px;background:#8a8a8a"></div>
<div class="a" style="left:828px;top:452.5px;width:8px;height:8px;border-radius:50%;background:#ececec"></div>
<svg class="a" style="left:852px;top:452.0px" width="9" height="9" viewBox="0 0 9 9"><path d="M0.5 0.5 L8.5 4.5 L0.5 8.5Z" fill="#ececec"/></svg>
<svg class="a" style="left:875px;top:451.0px" width="11" height="10" viewBox="0 0 11 10"><path d="M0.3 0.8 H4.5 L5.5 2 H10.7 V9.5 H0.3 Z" fill="#e8e8e8"/><path d="M0.3 2.8 H10.7" stroke="#7a7a7a" stroke-width="0.6"/></svg>
<svg class="a" style="left:902px;top:451.3px" width="11" height="11" viewBox="0 0 11 11"><rect x="0.8" y="0.8" width="9.4" height="9.4" rx="1" stroke="#e8e8e8" stroke-width="1.2" fill="none"/><path d="M5.5 2.8 V8.2 M2.8 5.5 H8.2" stroke="#e8e8e8" stroke-width="1.2"/></svg>
<svg class="a" style="left:926.5px;top:450.5px" width="10" height="12" viewBox="0 0 10 12"><path d="M3.5 1 H6.5 M0.5 2.5 H9.5" stroke="#cfcfcf" stroke-width="1.1"/><path d="M1.5 3.5 H8.5 L8 11.3 H2 Z" fill="#cfcfcf"/><path d="M3.7 5 V10 M5 5 V10 M6.3 5 V10" stroke="#8a8a8a" stroke-width="0.6"/></svg>
<!-- tools -->
<div class="a" style="left:3px;top:93.8px;width:26px;height:20px;background:#383838;border:1px solid #4a4a4a;border-radius:3px"></div>
<svg class="a" style="left:0;top:0" width="33" height="600" viewBox="0 0 33 600">
<path d="M5 50 L7.5 52.6 L5 55.2 M8.5 50 L11 52.6 L8.5 55.2" stroke="#f0f0f0" stroke-width="1.3" fill="none"/><rect x="0" y="47" width="1" height="553" fill="#3e3e3e"/>
<path d="M8 62 H23" stroke="#474747" stroke-width="2" stroke-dasharray="1 1"/>
<g transform="translate(5.5 72.5)"><path d="M10 3.5 V16.5 M3.5 10 H16.5" stroke="#e6e6e6" stroke-width="1.3"/><path d="M10 2.8 L12.3 5.3 H7.7Z M10 17.2 L12.3 14.7 H7.7Z M2.8 10 L5.3 7.7 V12.3Z M17.2 10 L14.7 7.7 V12.3Z" fill="#e6e6e6"/></g>
<g transform="translate(5.5 93.5)"><path d="M3.8 7.4 V5.6 Q3.8 4.3 5.1 4.3 H7.2 M13.6 4.3 H15.7 Q17 4.3 17 5.6 V7.4 M17 12 V13.8 Q17 15.1 15.7 15.1 H13.6 M7.2 15.1 H5.1 Q3.8 15.1 3.8 13.8 V12 M8.9 4.3 H11.9 M8.9 15.1 H11.9 M3.8 9 V10.4 M17 9 V10.4" stroke="#e6e6e6" stroke-width="1.5" fill="none"/></g>
<path d="M27.3 108.0 V111.0 H24.3 Z" fill="#cfcfcf"/>
<g transform="translate(5.5 115.3)"><path d="M3.8 4.5 L9.8 8.8 L16.6 3.8 L15.8 12 L9.6 14.2 L4.6 11.8" stroke="#e6e6e6" stroke-width="1.2" fill="none" stroke-linejoin="round"/><path d="M9.6 14.2 L5 17.5 M7.8 12.8 L10.6 17.4" stroke="#e6e6e6" stroke-width="1.2"/></g>
<path d="M27.3 129.8 V132.8 H24.3 Z" fill="#cfcfcf"/>
<g transform="translate(5.5 137)"><rect x="4.7" y="3.2" width="10.8" height="10.8" stroke="#bdbdbd" stroke-width="0.9" fill="none"/><rect x="6.3" y="4.8" width="5.5" height="6" fill="#e6e6e6"/><path d="M10.3 8.6 L17.8 13.6 L14.6 14.4 L16.4 17.4 L15.1 18 L13.4 15.1 L11.1 17.2 Z" fill="#e6e6e6" stroke="#535353" stroke-width="0.7"/></g>
<path d="M27.3 151.5 V154.5 H24.3 Z" fill="#cfcfcf"/>
<g transform="translate(5.5 158.5)"><path d="M6.3 3.2 V13.5 H17 M3 6.5 H13.5 V17" stroke="#e6e6e6" stroke-width="1.5" fill="none"/></g>
<path d="M27.3 173.0 V176.0 H24.3 Z" fill="#cfcfcf"/>
<g transform="translate(5.5 180)"><path d="M4.5 16.8 L4 15.6 L11 8.6 L12.4 10 L5.4 17 Z" stroke="#e6e6e6" stroke-width="1.1" fill="none"/><path d="M9.6 7.2 L13.8 11.4 M11.5 7 L14.4 4.1 C15.2 3.3 16.5 3.6 16.9 4.2 C17.4 5 17.1 6 16.5 6.6 L13.5 9.4Z" stroke="#e6e6e6" stroke-width="1.4" fill="#e6e6e6"/></g>
<path d="M27.3 194.5 V197.5 H24.3 Z" fill="#cfcfcf"/>
<g transform="translate(5.5 202)"><rect x="5" y="4.2" width="10.5" height="10.5" rx="1.6" fill="#8c8c8c" stroke="#e6e6e6" stroke-width="1.2" stroke-dasharray="1.2 1.1"/></g>
<path d="M27.3 216.5 V219.5 H24.3 Z" fill="#cfcfcf"/>
<g transform="translate(5.5 223.7)"><path d="M16.8 3 L17.6 3.8 L11 11.5 L9.4 10 Z" fill="#e6e6e6"/><path d="M8.8 10.8 L10.6 12.6 C10.4 15 8.6 16.6 4.2 16.8 C5 13.4 6.2 11.2 8.8 10.8 Z" fill="#e6e6e6"/></g>
<path d="M27.3 238.2 V241.2 H24.3 Z" fill="#cfcfcf"/>
<g transform="translate(5.5 245.5)"><circle cx="10.5" cy="5" r="2.6" fill="#e6e6e6"/><path d="M10.5 7 V10" stroke="#e6e6e6" stroke-width="2"/><path d="M4 14 C4 11.5 5 10.3 7 10.3 H14 C16 10.3 17 11.5 17 14 Z" fill="#e6e6e6"/><path d="M4.5 15.6 H16.5" stroke="#e6e6e6" stroke-width="1.2"/></g>
<path d="M27.3 260.0 V263.0 H24.3 Z" fill="#cfcfcf"/>
<g transform="translate(5.5 267.3)"><path d="M16.6 3.2 L17.4 4 L11.4 11.2 L9.8 9.8 Z" fill="#e6e6e6"/><path d="M9.2 10.5 L11 12.3 C10.8 14.6 9 16 5.4 16.2 C6 13 7 11 9.2 10.5 Z" fill="#e6e6e6"/><path d="M3.2 7.4 L5.2 5.2 L6.2 7.6Z" fill="#e6e6e6"/><path d="M5 6 C7 4.5 9.6 4.6 11.6 5.8 M15.5 8.5 C16 10 15.6 12.5 14 14" stroke="#e6e6e6" stroke-width="0.9" fill="none" stroke-dasharray="1 1"/></g>
<path d="M27.3 281.8 V284.8 H24.3 Z" fill="#cfcfcf"/>
<g transform="translate(5.5 289)"><path d="M4 12.8 L12 5 L16.8 9.6 L9.8 16.2 L7.2 16.2 Z" stroke="#e6e6e6" stroke-width="1.2" fill="none"/><path d="M12 5 L16.8 9.6 L12.2 14 L7.8 9.2 Z" fill="#e6e6e6"/><path d="M10 16.4 H17" stroke="#e6e6e6" stroke-width="1.2"/><path d="M5 13 L8 16" stroke="#e6e6e6" stroke-width="1"/></g>
<path d="M27.3 303.5 V306.5 H24.3 Z" fill="#cfcfcf"/>
<g transform="translate(5.5 310.7)"><path d="M3.6 11.6 L9.6 6 L15.4 11.8 L9.6 17.4 Z" stroke="#e6e6e6" stroke-width="1.3" fill="none"/><path d="M7.6 3 C8.6 2.4 9.4 3 9.6 4 L10 10" stroke="#e6e6e6" stroke-width="1.1" fill="none"/><circle cx="10" cy="10.3" r="0.9" fill="#e6e6e6"/><path d="M15.6 13 C16.8 14.5 17.4 15.3 17.4 16 C17.4 16.9 16.7 17.5 16 17.5 C15.2 17.5 14.6 16.9 14.6 16 C14.6 15.3 15 14.5 15.6 13Z" fill="#e6e6e6"/></g>
<path d="M27.3 325.2 V328.2 H24.3 Z" fill="#cfcfcf"/>
<g transform="translate(5.5 332.5)"><path d="M5.2 15 L9.5 10.6 M8 16.2 L12 12.2" stroke="#e6e6e6" stroke-width="1.8" stroke-linecap="round"/><path d="M6.5 7.5 C7.5 4.5 10.5 3.4 13.5 3.6 C16.2 3.8 17.2 5.4 17 7.6 C16.8 10 15 11.6 12.8 12.4 L11 10.6 L8.4 9.6 Z" fill="#e6e6e6"/></g>
<path d="M27.3 347.0 V350.0 H24.3 Z" fill="#cfcfcf"/>
<g transform="translate(5.5 354.2)"><circle cx="11.6" cy="7.6" r="4.3" fill="#dcdcdc" stroke="#e6e6e6" stroke-width="0.9"/><path d="M8.6 10.6 L3.6 15.6" stroke="#e6e6e6" stroke-width="1.3"/></g>
<path d="M27.3 368.7 V371.7 H24.3 Z" fill="#cfcfcf"/>
<g transform="translate(5.5 376)"><path d="M4.2 4.6 H15.8 V7.6 M4.2 7.6 V4.6 M10 4.6 V15.2 M7 15.2 H13" stroke="#e6e6e6" stroke-width="1.6" fill="none"/></g>
<path d="M27.3 390.5 V393.5 H24.3 Z" fill="#cfcfcf"/>
<g transform="translate(5.5 397.6)"><path d="M11 3.8 L16.2 8.8 L10 14.5 C8 15.3 6 15.8 4.2 16.2 C4.6 14.4 5 12.4 5.8 10.4 Z" stroke="#e6e6e6" stroke-width="1.2" fill="none" stroke-linejoin="round"/><path d="M12.3 2.6 L17.4 7.6 L16 9 L11 4 Z" fill="#e6e6e6"/><circle cx="9.2" cy="10" r="1.1" fill="#e6e6e6"/><path d="M4.5 15.9 L8.5 11" stroke="#e6e6e6" stroke-width="0.9"/></g>
<path d="M27.3 412.1 V415.1 H24.3 Z" fill="#cfcfcf"/>
<g transform="translate(5.5 419.3)"><path d="M7 3.5 L16 11.8 L12 12.3 L14.6 16.6 L12.8 17.6 L10.2 13.2 L7 15.8 Z" fill="#1e1e1e" stroke="#e6e6e6" stroke-width="1.2" stroke-linejoin="round"/></g>
<path d="M27.3 433.8 V436.8 H24.3 Z" fill="#cfcfcf"/>
<g transform="translate(5.5 441)"><rect x="4" y="4.5" width="13" height="11" rx="1.2" fill="#828282" stroke="#e6e6e6" stroke-width="1.3"/></g>
<path d="M27.3 455.5 V458.5 H24.3 Z" fill="#cfcfcf"/>
<g transform="translate(5.5 462.6)"><path d="M7.6 10.5 V4.6 M10 10 V3.4 M12.4 10 V4.2 M14.8 10.8 V6" stroke="#dedede" stroke-width="2.1" stroke-linecap="round"/><path d="M6.5 9.5 H15.9 V13 C15.9 15.6 14.4 17.2 11.8 17.2 H9.6 C8.1 17.2 7.1 16.3 6.2 15 L3.6 11 C3.1 10.1 4 9.2 4.9 9.8 L6.6 11.3 Z" fill="#dedede"/><path d="M8.8 4 V9.5 M11.2 3.2 V9.5 M13.6 4.5 V9.8" stroke="#535353" stroke-width="0.45"/></g>
<path d="M27.3 477.1 V480.1 H24.3 Z" fill="#cfcfcf"/>
<g transform="translate(5.5 484.3)"><circle cx="8.8" cy="8.4" r="5" stroke="#e6e6e6" stroke-width="1.3" fill="none"/><path d="M12.4 12 L16.8 16.4" stroke="#e6e6e6" stroke-width="1.7"/></g>
<g transform="translate(5.5 506)"><path d="M14.6 2.8 L15.4 3.6 L10 10.6 L8.4 9.2 Z" fill="#e6e6e6"/><path d="M7.8 10 L9.6 11.8 C9.4 14 7.6 15.6 4 15.8 C4.6 12.6 5.6 10.4 7.8 10 Z" fill="#e6e6e6"/><circle cx="13.5" cy="14.3" r="3.2" fill="none" stroke="#e6e6e6" stroke-width="1.1"/><path d="M11.8 15.8 L15.2 12.6 C15.8 13.6 15.6 15 14.8 15.6 C14 16.4 12.6 16.4 11.8 15.8Z" fill="#e6e6e6"/></g>
<g transform="translate(5.5 527.7)"><circle cx="10" cy="10" r="6.6" stroke="#e6e6e6" stroke-width="1.3" fill="none" stroke-dasharray="1.2 1.3"/><path d="M16.6 2.8 L17.4 3.6 L11.4 11 L9.8 9.6 Z" fill="#e6e6e6"/><path d="M9.2 10.4 L11 12.2 C10.8 14.3 9.2 15.6 6 15.8 C6.6 12.8 7.4 10.8 9.2 10.4 Z" fill="#e6e6e6"/></g>
<g transform="translate(5.5 549.4)"><path d="M17.2 2.8 L18.8 3.2 C19.8 5 20.2 7.5 19.6 9.8 C18.6 13.8 14 16.4 8.5 16.4 C5.5 16.4 2.4 15.6 2.1 14.3 C1.9 13.4 3 12.8 5.2 12.6 C9.6 12.2 13.4 10 15.4 6.6 C16.2 5.2 16.8 4 17.2 2.8 Z" fill="#f3d11a" stroke="#34345a" stroke-width="0.8"/></g>
<path d="M27.3 563.9 V566.9 H24.3 Z" fill="#cfcfcf"/>
<rect x="3.5" y="573.5" width="6" height="6" fill="#fff" stroke="#ddd" stroke-width="0.6"/>
<rect x="6" y="576" width="6.5" height="6.5" fill="#000" stroke="#ddd" stroke-width="1"/>
<rect x="3.5" y="573.5" width="5.5" height="5.5" fill="#fff" stroke="#222" stroke-width="0.6"/>
<path d="M19.5 575.5 C21 573.5 24 573.5 25 576 M26.5 579.5 C25 581.5 22 581.5 21 579" stroke="#e6e6e6" stroke-width="1.3" fill="none"/><path d="M18.5 573.5 L21.8 574.2 L19.6 577 Z M27.5 581.5 L24.2 580.8 L26.4 578 Z" fill="#e6e6e6"/>
<rect x="19.5" y="595.8" width="9" height="8" fill="#000" stroke="#e6e6e6" stroke-width="1"/>
<rect x="4" y="587" width="15.5" height="15" fill="#fff" stroke="#4a4a4a" stroke-width="0.8"/>
</svg>
<!-- dock -->
<div class="a" style="left:946px;top:471px;width:15px;height:129px;background:#474747"></div>
<div class="a" style="left:949px;top:473px;width:8.5px;height:11px;background:#626262;border-radius:4px"></div>
<div class="a" style="left:960px;top:47px;width:240px;height:553px;background:#424242"></div>
<svg class="a" style="left:981px;top:50px" width="8" height="6" viewBox="0 0 8 6"><path d="M3.5 0.8 L1.2 3 L3.5 5.2 M7 0.8 L4.7 3 L7 5.2" stroke="#e6e6e6" stroke-width="1" fill="none"/></svg>
<svg class="a" style="left:1187px;top:50px" width="8" height="6" viewBox="0 0 8 6"><path d="M1 0.8 L3.3 3 L1 5.2 M4.5 0.8 L6.8 3 L4.5 5.2" stroke="#e6e6e6" stroke-width="1" fill="none"/></svg>
<div class="a" style="left:962px;top:58px;width:30.5px;height:56px;background:#4b4b4b"></div>
<div class="a" style="left:970px;top:61px;width:15px;height:2px;background:repeating-linear-gradient(90deg,#3f3f3f 0 1px,transparent 1px 2px)"></div>
<div class="a" style="left:962px;top:116px;width:30.5px;height:32.30000000000001px;background:#4b4b4b"></div>
<div class="a" style="left:970px;top:119px;width:15px;height:2px;background:repeating-linear-gradient(90deg,#3f3f3f 0 1px,transparent 1px 2px)"></div>
<div class="a" style="left:962px;top:150px;width:30.5px;height:55.80000000000001px;background:#4b4b4b"></div>
<div class="a" style="left:970px;top:153px;width:15px;height:2px;background:repeating-linear-gradient(90deg,#3f3f3f 0 1px,transparent 1px 2px)"></div>
<div class="a" style="left:962px;top:207.5px;width:30.5px;height:32.80000000000001px;background:#4b4b4b"></div>
<div class="a" style="left:970px;top:210.5px;width:15px;height:2px;background:repeating-linear-gradient(90deg,#3f3f3f 0 1px,transparent 1px 2px)"></div>
<div class="a" style="left:962px;top:242px;width:30.5px;height:56px;background:#4b4b4b"></div>
<div class="a" style="left:970px;top:245px;width:15px;height:2px;background:repeating-linear-gradient(90deg,#3f3f3f 0 1px,transparent 1px 2px)"></div>
<div class="a" style="left:962px;top:300px;width:30.5px;height:55.5px;background:#4b4b4b"></div>
<div class="a" style="left:970px;top:303px;width:15px;height:2px;background:repeating-linear-gradient(90deg,#3f3f3f 0 1px,transparent 1px 2px)"></div>
<div class="a" style="left:962px;top:357px;width:30.5px;height:32px;background:#4b4b4b"></div>
<div class="a" style="left:970px;top:360px;width:15px;height:2px;background:repeating-linear-gradient(90deg,#3f3f3f 0 1px,transparent 1px 2px)"></div>
<div class="a" style="left:962px;top:391px;width:30.5px;height:32px;background:#4b4b4b"></div>
<div class="a" style="left:970px;top:394px;width:15px;height:2px;background:repeating-linear-gradient(90deg,#3f3f3f 0 1px,transparent 1px 2px)"></div>
<div class="a" style="left:962px;top:425px;width:30.5px;height:175px;background:#4b4b4b"></div>
<svg class="a" style="left:970px;top:68px" width="16" height="17" viewBox="0 0 16 17"><rect x="0.8" y="0.8" width="5" height="4.6" rx="0.5" fill="none" stroke="#e6e6e6" stroke-width="1"/><path d="M3.3 2 V4.2 M2.2 3.1 H4.4" stroke="#e6e6e6" stroke-width="0.9"/><rect x="0.8" y="6.2" width="5" height="4.6" rx="0.5" fill="none" stroke="#e6e6e6" stroke-width="1"/><path d="M2.2 8 L3.3 9.4 L4.4 8 Z" fill="#e6e6e6"/><rect x="0.8" y="11.6" width="5" height="4.8" fill="#e6e6e6"/><path d="M3.3 11.6 V16.4 M0.8 14 H5.8" stroke="#4b4b4b" stroke-width="0.7"/><path d="M9.2 4.6 C12.6 5 14.2 7.6 13.6 10.6 C13.2 12.6 11.8 14.2 9.6 15.2" stroke="#e6e6e6" stroke-width="1.4" fill="none"/><path d="M7.6 5.2 L10.8 1.8 L11.2 7.2 Z" fill="#e6e6e6"/></svg>
<div class="a" style="left:965.8px;top:90.5px;width:22px;height:19.5px;background:#333;border:1px solid #555;border-radius:2px"></div>
<svg class="a" style="left:970px;top:93px" width="14" height="15" viewBox="0 0 14 15"><path d="M1.5 1.2 L12.8 7.5 L1.5 13.8 Z" fill="#d0d0d0"/></svg>
<svg class="a" style="left:969px;top:126px" width="16" height="17" viewBox="0 0 16 17"><path d="M0.5 3 H15.5 M0.5 8.5 H15.5 M0.5 14 H15.5" stroke="#e6e6e6" stroke-width="1.1"/><circle cx="5" cy="3" r="2" fill="#4b4b4b" stroke="#e6e6e6" stroke-width="1.1"/><circle cx="10.5" cy="8.5" r="2" fill="#4b4b4b" stroke="#e6e6e6" stroke-width="1.1"/><circle cx="6" cy="14" r="2" fill="#4b4b4b" stroke="#e6e6e6" stroke-width="1.1"/></svg>
<svg class="a" style="left:969px;top:160px" width="18" height="17" viewBox="0 0 18 17"><path d="M1 2 H2 M1 4.5 H2 M1 7 H2 M3.5 2 H6.5 M3.5 4.5 H6.5 M3.5 7 H6.5" stroke="#e6e6e6" stroke-width="1"/><path d="M16.2 3 L17 3.8 L10.6 10.8 L9 9.4 Z" fill="#e6e6e6"/><path d="M8.3 10 L10.1 11.8 C9.9 14 8 15.8 4.5 16 C5.2 12.8 6.2 10.6 8.3 10 Z" fill="#e6e6e6"/></svg>
<svg class="a" style="left:968px;top:184px" width="18" height="16" viewBox="0 0 18 16"><path d="M1 4 C3 1.5 6 1.8 8 3.2 L8 4.8 C6 6.2 3 6.5 1 4 Z" fill="#e6e6e6"/><path d="M8 4 H16.5 M3 11.5 H10" stroke="#e6e6e6" stroke-width="1.8"/><path d="M9.5 11.5 L15.5 7 C17.5 9 17.5 14 15.5 15.5 Z" fill="#e6e6e6"/></svg>
<svg class="a" style="left:968px;top:217px" width="18" height="17" viewBox="0 0 18 17"><path d="M1 2 H2 M1 4.5 H2 M1 7 H2 M3.5 2 H6.5 M3.5 4.5 H6.5 M3.5 7 H6.5" stroke="#e6e6e6" stroke-width="1"/><circle cx="11.5" cy="4.6" r="2.4" fill="#e6e6e6"/><path d="M11.5 6.5 V9.5" stroke="#e6e6e6" stroke-width="1.8"/><path d="M6 13 C6 10.8 7 9.6 8.6 9.6 H14.4 C16 9.6 17 10.8 17 13 Z" fill="#e6e6e6"/><path d="M6.5 14.8 H16.5" stroke="#e6e6e6" stroke-width="1.1"/></svg>
<div class="t" style="left:968.5px;top:253.5px;font-size:14px;color:#e6e6e6">A</div>
<div class="a" style="left:982px;top:253px;width:1px;height:13px;background:#e6e6e6"></div>
<div class="t" style="left:970.5px;top:276px;font-size:14.5px;font-weight:bold;color:#e6e6e6">&#182;</div>
<svg class="a" style="left:970px;top:310px" width="14" height="15" viewBox="0 0 14 15"><rect x="1" y="1" width="12" height="13" rx="0.8" stroke="#e6e6e6" stroke-width="1.3" fill="none"/><rect x="3" y="3" width="3.5" height="5" fill="#bbb"/><rect x="7.5" y="3" width="3.5" height="5" fill="#e6e6e6"/><path d="M3 10.8 H11" stroke="#e6e6e6" stroke-width="1.4"/></svg>
<svg class="a" style="left:970px;top:333px" width="15" height="16" viewBox="0 0 15 16"><path d="M1 1 H13 V9.5 L9.5 14 H1 Z" fill="#e6e6e6"/><path d="M3 4 H11 M3 6.5 H11 M3 9 H8" stroke="#777" stroke-width="0.9"/><path d="M9.5 14 V10 H13.5" fill="#4b4b4b" stroke="#4b4b4b" stroke-width="0.9"/></svg>
<div class="a" style="left:971px;top:368.5px;width:13px;height:12px;border:1.2px solid #e6e6e6;background:linear-gradient(90deg,#222,#f0f0f0)"></div>
<svg class="a" style="left:971px;top:403px" width="13" height="12" viewBox="0 0 13 12"><rect x="1" y="4" width="11" height="7" fill="#e6e6e6"/><rect x="2.2" y="1.5" width="3" height="3" fill="#e6e6e6"/><rect x="7.8" y="1.5" width="3" height="3" fill="#e6e6e6"/></svg>
<div class="a" style="left:995px;top:58px;width:205px;height:230px;background:#535353"></div>
<div class="a" style="left:995px;top:58px;width:205px;height:23px;background:#474747"></div>
<div class="a" style="left:1055.3px;top:58px;width:32px;height:23px;background:#535353"></div>
<div class="t" style="left:1002.5px;top:65px;font-size:9.1px;font-weight:bold;color:#c2c2c2;-webkit-text-stroke:0">Histogram</div>
<div class="t" style="left:1063px;top:65px;font-size:9.2px;font-weight:bold;color:#f4f4f4;-webkit-text-stroke:0">Info</div>
<svg class="a" style="left:1187px;top:66.5px" width="9" height="7" viewBox="0 0 9 7"><rect x="0" y="0" width="9" height="7" fill="#9a9a9a"/><path d="M0 1.75 H9 M0 3.5 H9 M0 5.25 H9" stroke="#6a6a6a" stroke-width="0.6"/></svg>
<div class="a" style="left:1096.5px;top:84px;width:1px;height:68px;background:#474747"></div>
<div class="a" style="left:995px;top:152px;width:205px;height:1.2px;background:#474747"></div>
<div class="a" style="left:1096.5px;top:153px;width:1px;height:32px;background:#474747"></div>
<div class="a" style="left:995px;top:185px;width:205px;height:1.2px;background:#474747"></div>
<div class="a" style="left:995px;top:208px;width:205px;height:1.2px;background:#474747"></div>
<svg class="a" style="left:1000px;top:102.5px" width="14" height="14" viewBox="0 0 14 14"><path d="M1.6 12.4 L1.2 11.4 L6.8 5.8 L8 7 L2.4 12.6 Z" stroke="#e6e6e6" stroke-width="1" fill="none"/><path d="M6 4.6 L9.2 7.8 M7.6 4.4 L9.8 2.2 C10.4 1.6 11.5 1.8 11.8 2.3 C12.2 2.9 12 3.7 11.5 4.2 L9.4 6.2Z" stroke="#e6e6e6" stroke-width="1.2" fill="#e6e6e6"/><path d="M9.2 11 H12.2 L10.7 12.6 Z" fill="#e6e6e6"/></svg>
<svg class="a" style="left:1101px;top:102.5px" width="14" height="14" viewBox="0 0 14 14"><path d="M1.6 12.4 L1.2 11.4 L6.8 5.8 L8 7 L2.4 12.6 Z" stroke="#e6e6e6" stroke-width="1" fill="none"/><path d="M6 4.6 L9.2 7.8 M7.6 4.4 L9.8 2.2 C10.4 1.6 11.5 1.8 11.8 2.3 C12.2 2.9 12 3.7 11.5 4.2 L9.4 6.2Z" stroke="#e6e6e6" stroke-width="1.2" fill="#e6e6e6"/><path d="M9.2 11 H12.2 L10.7 12.6 Z" fill="#e6e6e6"/></svg>
<div class="t" style="left:1023.5px;top:94px;font-size:9.2px;color:#ebebeb">R :</div>
<div class="t" style="left:1023.5px;top:105px;font-size:9.2px;color:#ebebeb">G :</div>
<div class="t" style="left:1023.5px;top:116px;font-size:9.2px;color:#ebebeb">B :</div>
<div class="t" style="left:1013.5px;top:138px;font-size:9.2px;color:#ebebeb">8-bit</div>
<div class="t" style="left:1124.5px;top:94px;font-size:9.2px;color:#ebebeb">C :</div>
<div class="t" style="left:1123px;top:105px;font-size:9.2px;color:#ebebeb">M :</div>
<div class="t" style="left:1124.5px;top:116px;font-size:9.2px;color:#ebebeb">Y :</div>
<div class="t" style="left:1124.5px;top:127px;font-size:9.2px;color:#ebebeb">K :</div>
<div class="t" style="left:1114.5px;top:138px;font-size:9.2px;color:#ebebeb">8-bit</div>
<svg class="a" style="left:1000px;top:164px" width="14" height="14" viewBox="0 0 14 14"><path d="M6 1 V11 M1 6 H11" stroke="#e6e6e6" stroke-width="1.1"/><path d="M9.6 10.2 H12.6 L11.1 11.8 Z" fill="#e6e6e6"/></svg>
<div class="t" style="left:1023.5px;top:161px;font-size:9.2px;color:#ebebeb">X :</div>
<div class="t" style="left:1023.5px;top:171px;font-size:9.2px;color:#ebebeb">Y :</div>
<svg class="a" style="left:1101px;top:164px" width="14" height="14" viewBox="0 0 14 14"><path d="M2 2.8 H12 M2 2.8 V12.2 H12 V2.8" stroke="#e6e6e6" stroke-width="1.1" fill="none"/><path d="M10.6 1 L12.6 2.8 L10.6 4.6 Z M3.4 10.4 L1.4 12.2 L3.4 14 Z" fill="#e6e6e6"/></svg>
<div class="t" style="left:1122px;top:161px;font-size:9.2px;color:#ebebeb">W :</div>
<div class="t" style="left:1123.5px;top:171px;font-size:9.2px;color:#ebebeb">H :</div>
<div class="t" style="left:1003.5px;top:194.5px;font-size:9.1px;color:#ececec">Doc: 4.04M/8.07M</div>
<div class="t" style="left:1003.5px;top:217.5px;font-size:9.05px;color:#e6e6e6">Click and drag to move layer or selection</div>
<div class="t" style="left:1003.5px;top:228.5px;font-size:9.05px;color:#e6e6e6">constrained to 45 degree increments.</div>
<div class="a" style="left:995px;top:290px;width:205px;height:109px;background:#535353"></div>
<div class="a" style="left:995px;top:290px;width:205px;height:23px;background:#474747"></div>
<div class="a" style="left:1048px;top:290px;width:69.5px;height:23px;background:#535353"></div>
<div class="t" style="left:1003px;top:297px;font-size:9.1px;font-weight:bold;color:#c2c2c2;-webkit-text-stroke:0">Libraries</div>
<div class="t" style="left:1056px;top:297px;font-size:9.1px;font-weight:bold;color:#f4f4f4;-webkit-text-stroke:0">Adjustments</div>
<svg class="a" style="left:1187px;top:298.5px" width="9" height="7" viewBox="0 0 9 7"><rect x="0" y="0" width="9" height="7" fill="#9a9a9a"/><path d="M0 1.75 H9 M0 3.5 H9 M0 5.25 H9" stroke="#6a6a6a" stroke-width="0.6"/></svg>
<svg class="a" style="left:1003.5px;top:331px" width="9" height="6" viewBox="0 0 9 6"><path d="M1 1 L4.5 4.6 L8 1" stroke="#e6e6e6" stroke-width="1.3" fill="none"/></svg>
<div class="t" style="left:1017.5px;top:329.5px;font-size:9.1px;color:#ececec">Single adjustments</div>
<svg class="a" style="left:1165px;top:327.5px" width="12" height="12" viewBox="0 0 12 12"><rect x="0" y="0" width="5.2" height="5.2" fill="#f2f2f2"/><rect x="6.4" y="0" width="5.2" height="5.2" fill="#f2f2f2"/><rect x="0" y="6.4" width="5.2" height="5.2" fill="#f2f2f2"/><rect x="6.4" y="6.4" width="5.2" height="5.2" fill="#f2f2f2"/></svg>
<div class="a" style="left:1188.5px;top:316px;width:8px;height:17px;background:#6a6a6a;border-radius:4px"></div>
<svg class="a" style="left:1012px;top:359px" width="16" height="13" viewBox="0 0 16 13"><rect x="0.7" y="0.7" width="14.6" height="11.6" stroke="#e6e6e6" stroke-width="1.1" fill="none"/><defs><linearGradient id="hg" x1="0" x2="1"><stop offset="0" stop-color="#111"/><stop offset="1" stop-color="#eee"/></linearGradient></defs><rect x="1.8" y="6" width="12.4" height="5.4" fill="url(#hg)"/><path d="M1.8 3 H14.2" stroke="#e6e6e6" stroke-width="3.2" stroke-dasharray="2 1.2"/></svg>
<div class="t" style="left:1037px;top:361.5px;font-size:9.1px;color:#ececec">Hue/Saturation</div>
<svg class="a" style="left:1011.5px;top:384px" width="16" height="15" viewBox="0 0 16 15"><circle cx="8" cy="7.5" r="3.6" stroke="#e6e6e6" stroke-width="1.1" fill="none"/><path d="M8 3.9 A3.6 3.6 0 0 1 8 11.1 Z" fill="#e6e6e6"/><path d="M8 0.5 V2.2 M8 12.8 V14.5 M1 7.5 H2.7 M13.3 7.5 H15 M3 2.5 L4.2 3.7 M11.8 11.3 L13 12.5 M13 2.5 L11.8 3.7 M4.2 11.3 L3 12.5" stroke="#e6e6e6" stroke-width="1"/></svg>
<div class="t" style="left:1037px;top:387.5px;font-size:9.1px;color:#ececec">Brightness/Contrast</div>
<div class="a" style="left:995px;top:401px;width:205px;height:199px;background:#535353"></div>
<div class="a" style="left:995px;top:401px;width:205px;height:23px;background:#474747"></div>
<div class="a" style="left:995px;top:401px;width:43px;height:23px;background:#535353"></div>
<div class="t" style="left:1002.6px;top:408px;font-size:9.1px;font-weight:bold;color:#f4f4f4;-webkit-text-stroke:0">Layers</div>
<div class="t" style="left:1046px;top:408px;font-size:9.1px;font-weight:bold;color:#c2c2c2;-webkit-text-stroke:0">Channels</div>
<svg class="a" style="left:1187px;top:409.5px" width="9" height="7" viewBox="0 0 9 7"><rect x="0" y="0" width="9" height="7" fill="#9a9a9a"/><path d="M0 1.75 H9 M0 3.5 H9 M0 5.25 H9" stroke="#6a6a6a" stroke-width="0.6"/></svg>
<div class="a" style="left:998px;top:431.7px;width:73px;height:15.5px;background:#474747;border:1px solid #5a5a5a;border-radius:3px"></div>
<svg class="a" style="left:1004px;top:434px" width="10" height="11" viewBox="0 0 10 11"><circle cx="4.2" cy="4.4" r="3.1" stroke="#e6e6e6" stroke-width="1.1" fill="none"/><path d="M6.4 6.8 L9 9.6" stroke="#e6e6e6" stroke-width="1.4"/></svg>
<div class="t" style="left:1015.5px;top:435px;font-size:9.1px;color:#ececec">Kind</div>
<svg class="a" style="left:1062.5px;top:437.5px" width="7" height="5" viewBox="0 0 7 5"><path d="M0.7 0.8 L3.5 3.8 L6.3 0.8" stroke="#e6e6e6" stroke-width="1.1" fill="none"/></svg>
<svg class="a" style="left:1080px;top:433px" width="12" height="12" viewBox="0 0 12 12"><rect x="0.7" y="1" width="10.6" height="9.6" rx="0.6" stroke="#e6e6e6" stroke-width="1" fill="none"/><path d="M2.5 9 L4.7 6 L6 7.5 L7.3 5.8 L9.5 9 Z" fill="#e6e6e6"/></svg>
<svg class="a" style="left:1099.5px;top:433px" width="12" height="12" viewBox="0 0 12 12"><circle cx="6" cy="6" r="4.6" stroke="#e6e6e6" stroke-width="1.1" fill="none"/><path d="M9.3 2.7 A4.6 4.6 0 0 1 2.7 9.3 Z" fill="#e6e6e6"/></svg>
<svg class="a" style="left:1120.5px;top:433px" width="11" height="12" viewBox="0 0 11 12"><path d="M1 3.4 V1.2 H10 V3.4 M5.5 1.2 V10.8 M3.2 10.8 H7.8" stroke="#e6e6e6" stroke-width="1.3" fill="none"/></svg>
<svg class="a" style="left:1140.5px;top:433px" width="12" height="12" viewBox="0 0 12 12"><rect x="2" y="2" width="8" height="8" stroke="#e6e6e6" stroke-width="1.1" fill="none"/><rect x="0.5" y="0.5" width="3" height="3" fill="#e6e6e6"/><rect x="8.5" y="0.5" width="3" height="3" fill="#e6e6e6"/><rect x="0.5" y="8.5" width="3" height="3" fill="#e6e6e6"/><rect x="8.5" y="8.5" width="3" height="3" fill="#e6e6e6"/></svg>
<svg class="a" style="left:1161.5px;top:433px" width="11" height="13" viewBox="0 0 11 13"><path d="M4 1 H8 L10.5 3.5 V10 H4 Z" stroke="#e6e6e6" stroke-width="1" fill="none"/><rect x="0.8" y="6" width="5.5" height="6" fill="#e6e6e6"/></svg>
<div class="a" style="left:1181px;top:432px;width:8px;height:15px;border-radius:4px;background:#4a4a4a;border:1px solid #5e5e5e"></div>
<div class="a" style="left:1181px;top:431px;width:8px;height:8px;border-radius:50%;background:#e8e8e8"></div>
<div class="a" style="left:995px;top:450.3px;width:205px;height:1px;background:#474747"></div>
<div class="a" style="left:998px;top:455.3px;width:108.6px;height:14.5px;background:#474747;border:1px solid #5a5a5a;border-radius:3px"></div>
<div class="t" style="left:1004px;top:458.5px;font-size:9.1px;color:#ececec">Normal</div>
<svg class="a" style="left:1097.5px;top:460.5px" width="7" height="5" viewBox="0 0 7 5"><path d="M0.7 0.8 L3.5 3.8 L6.3 0.8" stroke="#e6e6e6" stroke-width="1.1" fill="none"/></svg>
<div class="t" style="left:1109.6px;top:458.5px;font-size:8.9px;color:#dcdcdc">Opacity:</div>
<div class="a" style="left:1145.6px;top:455.3px;width:41.4px;height:14.5px;background:#474747;border:1px solid #5a5a5a;border-radius:3px"></div>
<div class="a" style="left:1175px;top:455.3px;width:1px;height:14.5px;background:#5a5a5a"></div>
<div class="t" style="left:1148.5px;top:458.5px;font-size:9.1px;color:#ececec">100%</div>
<svg class="a" style="left:1178.2px;top:460.5px" width="7" height="5" viewBox="0 0 7 5"><path d="M0.7 0.8 L3.5 3.8 L6.3 0.8" stroke="#e6e6e6" stroke-width="1.1" fill="none"/></svg>
<div class="a" style="left:995px;top:474.3px;width:205px;height:1px;background:#474747"></div>
<div class="t" style="left:999px;top:482px;font-size:8.9px;color:#dcdcdc">Lock:</div>
<svg class="a" style="left:1026px;top:481px" width="11" height="11" viewBox="0 0 11 11"><rect x="0.5" y="0.5" width="10" height="10" fill="none" stroke="#bbb" stroke-width="0.8"/><path d="M2 2 h2 v2 h-2z M6 2 h2 v2 h-2z M4 4 h2 v2 h-2z M8 4 h1.5 v2 h-1.5z M2 6 h2 v2 h-2z M6 6 h2 v2 h-2z M4 8 h2 v1.5 h-2z" fill="#ccc"/></svg>
<svg class="a" style="left:1044.5px;top:480px" width="11" height="13" viewBox="0 0 11 13"><path d="M10 0.8 L10.6 1.4 L5.2 7.4 L4 6.4 Z" fill="#9a9a9a"/><path d="M3.5 7 L4.8 8.3 C4.6 10.4 3.2 11.8 0.6 12 C1 9.5 1.8 7.4 3.5 7 Z" fill="#9a9a9a"/></svg>
<svg class="a" style="left:1061.5px;top:480.5px" width="12" height="12" viewBox="0 0 12 12"><path d="M6 1.5 V10.5 M1.5 6 H10.5" stroke="#e6e6e6" stroke-width="1.1"/><path d="M6 0.3 L7.8 2.3 H4.2Z M6 11.7 L7.8 9.7 H4.2Z M0.3 6 L2.3 4.2 V7.8Z M11.7 6 L9.7 4.2 V7.8Z" fill="#e6e6e6"/></svg>
<svg class="a" style="left:1080px;top:480.5px" width="12" height="12" viewBox="0 0 12 12"><path d="M2.5 0.5 V9.5 H11.5 M0.5 2.5 H9.5 V11.5" stroke="#e6e6e6" stroke-width="1" fill="none" stroke-dasharray="1.3 0.7"/><path d="M2.5 2.5 L6 2.5 L9.5 6 V9.5 H2.5Z" stroke="#e6e6e6" stroke-width="1" fill="none"/></svg>
<svg class="a" style="left:1099px;top:479.5px" width="10" height="13" viewBox="0 0 10 13"><path d="M2.5 6 V4 C2.5 2 3.6 1 5 1 C6.4 1 7.5 2 7.5 4 V6" stroke="#e6e6e6" stroke-width="1.3" fill="none"/><rect x="1" y="5.8" width="8" height="6.4" rx="0.8" fill="#e6e6e6"/><rect x="4.3" y="8" width="1.4" height="2" fill="#535353"/></svg>
<div class="t" style="left:1129px;top:482px;font-size:8.9px;color:#dcdcdc">Fill:</div>
<div class="a" style="left:1145.6px;top:478.6px;width:41.4px;height:14px;background:#474747;border:1px solid #5a5a5a;border-radius:3px"></div>
<div class="a" style="left:1175px;top:478.6px;width:1px;height:14px;background:#5a5a5a"></div>
<div class="t" style="left:1148.5px;top:482px;font-size:9.1px;color:#ececec">100%</div>
<svg class="a" style="left:1178.2px;top:483.5px" width="7" height="5" viewBox="0 0 7 5"><path d="M0.7 0.8 L3.5 3.8 L6.3 0.8" stroke="#e6e6e6" stroke-width="1.1" fill="none"/></svg>
<div class="a" style="left:995px;top:497.5px;width:205px;height:1.5px;background:#474747"></div>
<div class="a" style="left:1187px;top:499px;width:13px;height:101px;background:#4b4b4b"></div>
<div class="a" style="left:1020.3px;top:499.2px;width:166.7px;height:21.3px;background:#696969"></div>
<div class="a" style="left:995px;top:520.5px;width:192px;height:1.2px;background:#474747"></div>
<div class="a" style="left:995px;top:555px;width:192px;height:1.5px;background:#474747"></div>
<div class="a" style="left:995px;top:590px;width:192px;height:1.5px;background:#474747"></div>
<div class="a" style="left:1019.8px;top:499px;width:1px;height:91px;background:#474747"></div>
<svg class="a" style="left:1001.5px;top:506.0px" width="12" height="9" viewBox="0 0 12 9"><path d="M0.6 4.5 C2 2 4 0.8 6 0.8 C8 0.8 10 2 11.4 4.5 C10 7 8 8.2 6 8.2 C4 8.2 2 7 0.6 4.5 Z" fill="#e6e6e6"/><circle cx="6" cy="4.5" r="2.3" fill="#535353"/><circle cx="6" cy="4.5" r="1" fill="#e6e6e6"/></svg>
<svg class="a" style="left:1001.5px;top:534.0px" width="12" height="9" viewBox="0 0 12 9"><path d="M0.6 4.5 C2 2 4 0.8 6 0.8 C8 0.8 10 2 11.4 4.5 C10 7 8 8.2 6 8.2 C4 8.2 2 7 0.6 4.5 Z" fill="#e6e6e6"/><circle cx="6" cy="4.5" r="2.3" fill="#535353"/><circle cx="6" cy="4.5" r="1" fill="#e6e6e6"/></svg>
<svg class="a" style="left:1001.5px;top:568.3px" width="12" height="9" viewBox="0 0 12 9"><path d="M0.6 4.5 C2 2 4 0.8 6 0.8 C8 0.8 10 2 11.4 4.5 C10 7 8 8.2 6 8.2 C4 8.2 2 7 0.6 4.5 Z" fill="#e6e6e6"/><circle cx="6" cy="4.5" r="2.3" fill="#535353"/><circle cx="6" cy="4.5" r="1" fill="#e6e6e6"/></svg>
<svg class="a" style="left:1029px;top:506px" width="7" height="9" viewBox="0 0 7 9"><path d="M5.5 1 V5 H1.8" stroke="#e6e6e6" stroke-width="1.1" fill="none"/><path d="M0.6 5 L2.6 3.2 V6.8Z" fill="#e6e6e6"/></svg>
<svg class="a" style="left:1043px;top:504.5px" width="15" height="12" viewBox="0 0 15 12"><rect x="0.6" y="0.6" width="13.8" height="10.8" stroke="#e6e6e6" stroke-width="1" fill="none"/><defs><linearGradient id="hg2" x1="0" x2="1"><stop offset="0" stop-color="#111"/><stop offset="1" stop-color="#eee"/></linearGradient></defs><rect x="1.6" y="5.6" width="11.8" height="5" fill="url(#hg2)"/><path d="M1.6 3 H13.4" stroke="#e6e6e6" stroke-width="2.6" stroke-dasharray="2 1.2"/></svg>
<svg class="a" style="left:1066px;top:503px" width="8" height="15" viewBox="0 0 8 15"><rect x="1" y="1" width="5.6" height="6" rx="2.8" stroke="#e6e6e6" stroke-width="1" fill="none"/><rect x="1" y="8" width="5.6" height="6" rx="2.8" stroke="#e6e6e6" stroke-width="1" fill="none"/><path d="M3.8 4.5 V10.5" stroke="#e6e6e6" stroke-width="1"/></svg>
<div class="a" style="left:1074.4px;top:500.5px;width:30.3px;height:18.5px;background:#fff;border:1.5px solid #1a1a1a;outline:1px solid #e8e8e8"></div>
<div class="t" style="left:1109px;top:505.7px;font-size:9.1px;color:#f0f0f0">Hue/Saturation 1</div>
<div class="a" style="left:1023.5px;top:531px;width:26.5px;height:14px;background:#1e1e1e"></div>
<svg class="a" style="left:1024.5px;top:532px" width="24.5" height="12" viewBox="0 0 24.5 12"><defs><linearGradient id="t1" x1="0" x2="1"><stop offset="0" stop-color="#cfcfcf"/><stop offset="1" stop-color="#e6e6e6"/></linearGradient></defs><rect width="24.5" height="12" fill="url(#t1)"/><rect y="6.5" width="24.5" height="5.5" fill="#b8b8b8"/><path d="M0 4.2 L4 5 L8 6 L11 7 L14 8.2 L16 10 L17 12 H0 Z" fill="#3c3c3c"/><path d="M14 10.5 L17 9.8 L24.5 11 V12 H14 Z" fill="#8a8a8a"/></svg>
<div class="t" style="left:1056.5px;top:534px;font-size:9.1px;color:#f0f0f0;text-decoration:underline">Layer 1</div>
<div class="a" style="left:1023.5px;top:565px;width:26.5px;height:14px;background:#1e1e1e"></div>
<svg class="a" style="left:1024.5px;top:566px" width="24.5" height="12" viewBox="0 0 24.5 12"><defs><linearGradient id="t2" x1="0" x2="1"><stop offset="0" stop-color="#cfc9c3"/><stop offset="1" stop-color="#e2e0dd"/></linearGradient></defs><rect width="24.5" height="12" fill="url(#t2)"/><rect y="6.5" width="24.5" height="5.5" fill="#b9b3ad"/><path d="M0 4.2 L4 5 L8 6 L11 7 L14 8.2 L16 10 L17 12 H0 Z" fill="#5c4632"/><path d="M14 10.5 L17 9.8 L24.5 11 V12 H14 Z" fill="#a08470"/></svg>
<div class="t" style="left:1056.5px;top:568px;font-size:9.1px;color:#f0f0f0">Background</div>
<svg class="a" style="left:1164px;top:567.5px" width="10" height="11" viewBox="0 0 10 11"><path d="M2.6 4.8 V3.2 C2.6 1.8 3.6 0.9 5 0.9 C6.4 0.9 7.4 1.8 7.4 3.2 V4.8" stroke="#e6e6e6" stroke-width="1" fill="none"/><rect x="1.2" y="4.8" width="7.6" height="5.6" rx="0.6" stroke="#e6e6e6" stroke-width="1" fill="none"/><rect x="4.4" y="6.8" width="1.3" height="1.6" fill="#e6e6e6"/></svg>
</body></html>
